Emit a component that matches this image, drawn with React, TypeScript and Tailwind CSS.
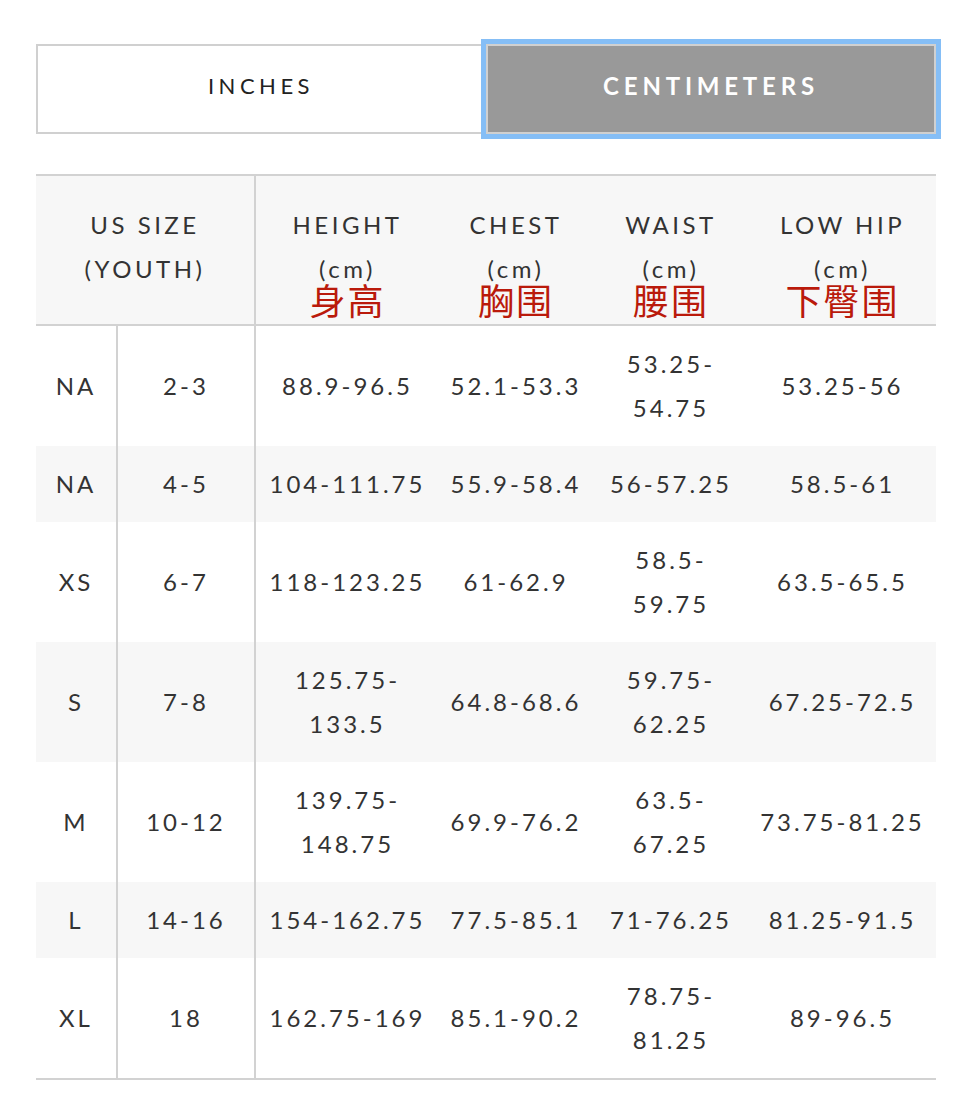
import React, { useState } from "react";

type Cell = string | string[];

const rows: { us: string; youth: string; vals: Cell[] }[] = [
  { us: "NA", youth: "2-3", vals: ["88.9-96.5", "52.1-53.3", ["53.25-", "54.75"], "53.25-56"] },
  { us: "NA", youth: "4-5", vals: ["104-111.75", "55.9-58.4", "56-57.25", "58.5-61"] },
  { us: "XS", youth: "6-7", vals: ["118-123.25", "61-62.9", ["58.5-", "59.75"], "63.5-65.5"] },
  { us: "S", youth: "7-8", vals: [["125.75-", "133.5"], "64.8-68.6", ["59.75-", "62.25"], "67.25-72.5"] },
  { us: "M", youth: "10-12", vals: [["139.75-", "148.75"], "69.9-76.2", ["63.5-", "67.25"], "73.75-81.25"] },
  { us: "L", youth: "14-16", vals: ["154-162.75", "77.5-85.1", "71-76.25", "81.25-91.5"] },
  { us: "XL", youth: "18", vals: ["162.75-169", "85.1-90.2", ["78.75-", "81.25"], "89-96.5"] },
];

const heads = [
  { en: "HEIGHT", zh: "身高" },
  { en: "CHEST", zh: "胸围" },
  { en: "WAIST", zh: "腰围" },
  { en: "LOW HIP", zh: "下臀围" },
];

function Value({ v }: { v: Cell }) {
  if (Array.isArray(v)) {
    return (
      <>
        {v.map((line, i) => (
          <div key={i} className="whitespace-nowrap">{line}</div>
        ))}
      </>
    );
  }
  return <div className="whitespace-nowrap">{v}</div>;
}

export default function App() {
  const [unit, setUnit] = useState("cm");

  return (
    <div className="min-h-screen bg-white font-['Lato','Liberation_Sans',sans-serif] text-[#333]">
      <div className="ml-[36px] w-[900px] pt-[44px] pb-[20px]">
        {/* unit tabs */}
        <div className="flex">
          <button
            onClick={() => setUnit("in")}
            className="h-[90px] w-[450px] border-2 border-[#d0d0d0] bg-white pb-[8px] text-[22px] tracking-[4.5px] text-[#222]"
          >
            INCHES
          </button>
          <button
            onClick={() => setUnit("cm")}
            className={
              unit === "cm"
                ? "relative h-[90px] w-[450px] border-2 border-[#d0d0d0] bg-[#999999] pb-[6px] text-[24px] font-bold tracking-[4.8px] text-white outline-[5px] outline-solid outline-[#85bef6]"
                : "h-[90px] w-[450px] border-2 border-[#d0d0d0] bg-white pb-[6px] text-[22px] tracking-[4.5px] text-[#222]"
            }
          >
            CENTIMETERS
          </button>
        </div>

        {/* size table */}
        <table className="mt-[40px] w-[900px] table-fixed text-center text-[24px] leading-[44px] tracking-[3px]">
          <colgroup>
            <col className="w-[81px]" />
            <col className="w-[138px]" />
            <col className="w-[184px]" />
            <col className="w-[154px]" />
            <col className="w-[156px]" />
            <col className="w-[187px]" />
          </colgroup>
          <thead>
            <tr className="border-y-2 border-[#d2d2d2] bg-[#f7f7f7] tracking-[3.5px]">
              <th colSpan={2} className="border-r-2 border-[#d2d2d2] pt-[27px] pb-[7px] align-top font-normal">
                <div>US SIZE</div>
                <div>(YOUTH)</div>
              </th>
              {heads.map((h) => (
                <th key={h.en} className="pt-[27px] pb-[7px] align-top font-normal">
                  <div className="whitespace-nowrap">{h.en}</div>
                  <div>(cm)</div>
                  <div className="-mt-[10px] whitespace-nowrap font-['Noto_Sans_CJK_SC',sans-serif] text-[36px] leading-[36px] tracking-[2px] text-[#ba1a0b]">
                    {h.zh}
                  </div>
                </th>
              ))}
            </tr>
          </thead>
          <tbody>
            {rows.map((r, i) => (
              <tr
                key={i}
                className={
                  (i % 2 === 1 ? "bg-[#f7f7f7]" : "bg-white") +
                  (i === rows.length - 1 ? " border-b-2 border-[#d2d2d2]" : "")
                }
              >
                <td className="border-r-2 border-[#d2d2d2] py-4">{r.us}</td>
                <td className="border-r-2 border-[#d2d2d2] py-4">{r.youth}</td>
                {r.vals.map((v, j) => (
                  <td key={j} className="py-4">
                    <Value v={v} />
                  </td>
                ))}
              </tr>
            ))}
          </tbody>
        </table>
      </div>
    </div>
  );
}
